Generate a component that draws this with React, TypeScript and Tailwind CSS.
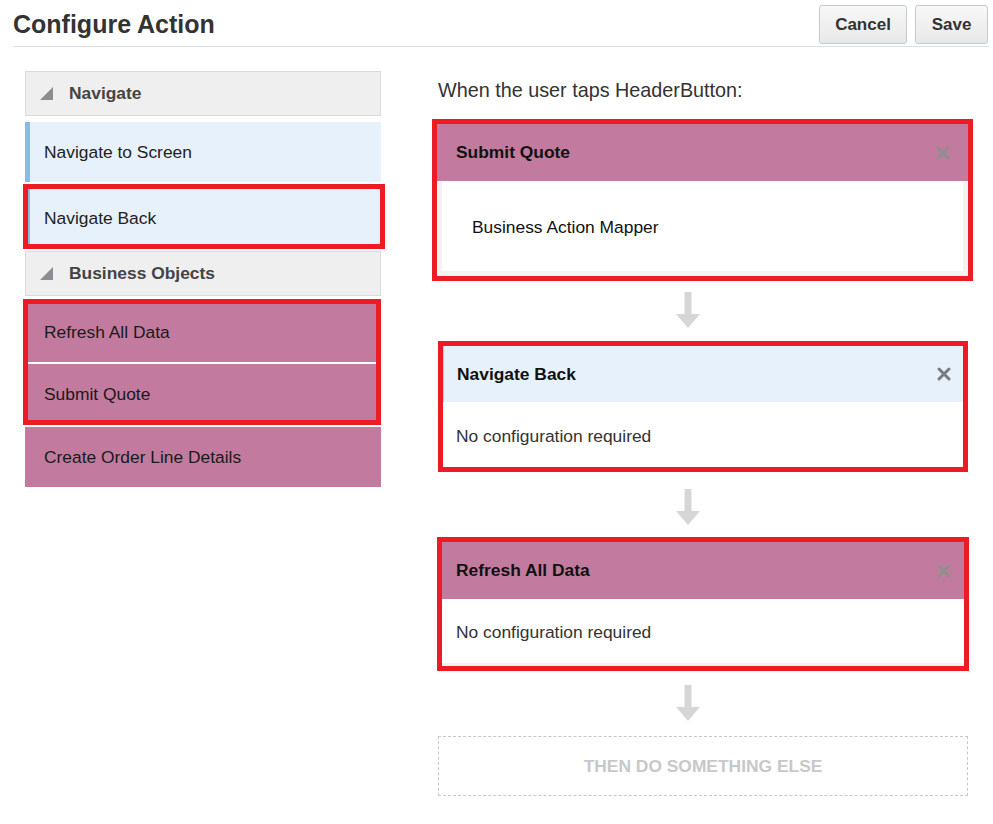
import { X } from 'lucide-react'

const font = { fontFamily: '"Liberation Sans", Arial, sans-serif' }

const Triangle = () => (
  <svg width="13" height="13" viewBox="0 0 13 13" className="shrink-0">
    <polygon points="13,0 13,13 0,13" fill="#8a8d91" />
  </svg>
)

const DownArrow = () => (
  <svg width="24" height="36" viewBox="0 0 24 36">
    <rect x="8.5" y="0" width="7" height="23" fill="#d6d6d6" />
    <polygon points="0,22 24,22 12,36" fill="#d6d6d6" />
  </svg>
)

const GroupHeader = ({ label }: { label: string }) => (
  <div className="h-[45px] flex items-center gap-[16px] pl-[14px] bg-[#efefef] border border-[#dadada] font-bold text-[17.4px] text-[#444]">
    <Triangle />
    <span>{label}</span>
  </div>
)

const NavItem = ({ label }: { label: string }) => (
  <div className="h-[60px] flex items-center pl-[14px] bg-[#e6f1fb] border-l-[5px] border-[#85bde8] text-[17.4px] text-[#222]">
    {label}
  </div>
)

const BizItem = ({ label }: { label: string }) => (
  <div className="h-[60px] flex items-center pl-[19px] bg-[#c27b9e] text-[17.4px] text-[#1a1a1a]">{label}</div>
)

const RedBox = ({ className }: { className: string }) => (
  <span className={`absolute pointer-events-none border-[5px] border-[#ed1c24] ${className}`} />
)

const ArrowRow = ({ className }: { className: string }) => (
  <div className={`flex pl-[238px] ${className}`}>
    <DownArrow />
  </div>
)

export default function App() {
  return (
    <div className="w-[993px] h-[824px] bg-white text-[#333] overflow-hidden" style={font}>
      {/* Header */}
      <div className="ml-[13px] mr-[5px] h-[47px] flex items-center justify-between border-b border-[#d9e1e8]">
        <h1 className="text-[25px] font-bold text-[#333] mt-[4px]">Configure Action</h1>
        <div className="flex gap-[8px] self-start mt-[5px]">
          <button className="w-[88px] h-[39px] rounded-[3px] border border-[#c4ccd2] bg-gradient-to-b from-[#f8f8f8] to-[#e8e8e8] font-bold text-[17px] text-[#333]">
            Cancel
          </button>
          <button className="w-[73px] h-[39px] rounded-[3px] border border-[#c4ccd2] bg-gradient-to-b from-[#f8f8f8] to-[#e8e8e8] font-bold text-[17px] text-[#333]">
            Save
          </button>
        </div>
      </div>

      <div className="flex pt-[24px]">
        {/* Left palette */}
        <div className="ml-[25px] w-[356px] flex flex-col">
          <GroupHeader label="Navigate" />
          <div className="mt-[6px]">
            <NavItem label="Navigate to Screen" />
          </div>
          <div className="relative mt-[6px]">
            <NavItem label="Navigate Back" />
            <RedBox className="-left-[2px] -right-[4px] -top-[4px] -bottom-[1px]" />
          </div>
          <div className="mt-[3px]">
            <GroupHeader label="Business Objects" />
          </div>
          <div className="relative mt-[6px] flex flex-col gap-[2px]">
            <BizItem label="Refresh All Data" />
            <BizItem label="Submit Quote" />
            <RedBox className="-left-[2px] right-0 -top-[3px] -bottom-[1px]" />
          </div>
          <div className="mt-[3px]">
            <BizItem label="Create Order Line Details" />
          </div>
        </div>

        {/* Action chain */}
        <div className="ml-[57px] w-[530px] flex flex-col">
          <div className="mt-[8px] leading-[22px] text-[19.8px] text-[#333]">When the user taps HeaderButton:</div>

          <div className="relative mt-[23px] -ml-px">
            <div className="h-[57px] flex items-center justify-between pl-[19px] pr-[15px] bg-[#c27b9e]">
              <span className="font-bold text-[17.4px] text-[#111]">Submit Quote</span>
              <X size={20} strokeWidth={3.6} className="text-[#8f8f8f]" />
            </div>
            <div className="h-[95px] flex items-center pt-[3px] pl-[30px] bg-white border-[5px] border-t-0 border-[#f3f3f3] text-[17.4px] text-[#111]">
              Business Action Mapper
            </div>
            <RedBox className="-inset-[5px]" />
          </div>

          <ArrowRow className="mt-[16px] mb-[18px]" />

          <div className="relative mx-[5px]">
            <div className="h-[56px] flex items-center justify-between pl-[13px] pr-[9px] bg-[#e6f1fb] border-l border-[#b5d3ee]">
              <span className="font-bold text-[17.4px] text-[#111]">Navigate Back</span>
              <X size={20} strokeWidth={3.6} className="text-[#7c7c7c]" />
            </div>
            <div className="h-[65px] flex items-center pt-[4px] pl-[13px] bg-white text-[17.4px] text-[#333]">
              No configuration required
            </div>
            <RedBox className="-inset-[5px]" />
          </div>

          <ArrowRow className="mt-[22px] mb-[17px]" />

          <div className="relative mx-[4px]">
            <div className="h-[57px] flex items-center justify-between pl-[14px] pr-[10px] bg-[#c27b9e]">
              <span className="font-bold text-[17.4px] text-[#111]">Refresh All Data</span>
              <X size={20} strokeWidth={3.6} className="text-[#8f8f8f]" />
            </div>
            <div className="h-[67px] flex items-center pt-[2px] pl-[14px] bg-white border-b-[3px] border-[#f3f3f3] text-[17.4px] text-[#333]">
              No configuration required
            </div>
            <RedBox className="-inset-[5px]" />
          </div>

          <ArrowRow className="mt-[19px] mb-[15px]" />

          <div className="h-[60px] flex items-center justify-center border border-dashed border-[#c8c8c8] font-bold text-[17.4px] text-[#c8c8c8]">
            THEN DO SOMETHING ELSE
          </div>
        </div>
      </div>
    </div>
  )
}
